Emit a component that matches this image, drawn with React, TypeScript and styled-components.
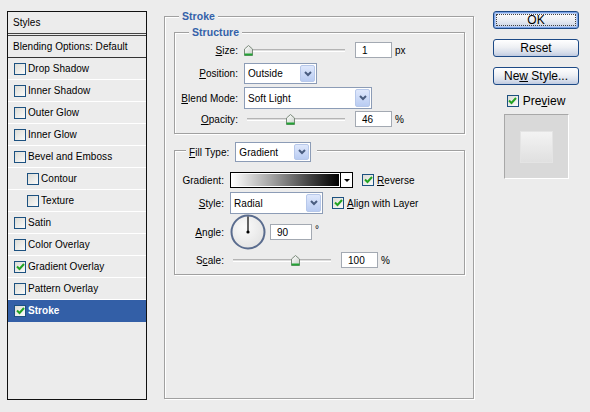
import React from "react";
import styled, { createGlobalStyle, css } from "styled-components";

const GlobalStyle = createGlobalStyle`
  html, body {
    margin: 0;
    padding: 0;
    background: #ececec;
  }
  body {
    font-family: "Liberation Sans", Arial, sans-serif;
    font-size: 10px;
    letter-spacing: 0.05px;
    color: #000;
  }
`;

const listItems = [
  { name: "Drop Shadow" },
  { name: "Inner Shadow" },
  { name: "Outer Glow" },
  { name: "Inner Glow" },
  { name: "Bevel and Emboss" },
  { name: "Contour", indent: true },
  { name: "Texture", indent: true },
  { name: "Satin" },
  { name: "Color Overlay" },
  { name: "Gradient Overlay", checked: true },
  { name: "Pattern Overlay" },
  { name: "Stroke", checked: true, selected: true },
];

const Tick = () => (
  <svg width="9" height="8" viewBox="0 0 9 8">
    <path d="M1 3.5 L3.5 6 L8 1" stroke="#22a322" strokeWidth="2" fill="none" />
  </svg>
);

const Chevron = () => (
  <svg width="8" height="6" viewBox="0 0 8 6">
    <path d="M1 1 L4 4 L7 1" stroke="#4a5d80" strokeWidth="2" fill="none" />
  </svg>
);

const CheckBox = ({ checked }: { checked?: boolean }) => (
  <Box>{checked && <Tick />}</Box>
);

const Thumb = ({ left }: { left: number }) => (
  <ThumbSvg style={{ left }} width="9" height="11" viewBox="0 0 9 11">
    <defs>
      <linearGradient id="thumbFill" x1="0" y1="0" x2="1" y2="1">
        <stop offset="0" stopColor="#ffffff" />
        <stop offset="1" stopColor="#c9cfc9" />
      </linearGradient>
    </defs>
    <path d="M0.5 4 L4.5 0.5 L8.5 4 V10.5 H0.5 Z" fill="url(#thumbFill)" stroke="#7b8a7b" />
    <rect x="0.5" y="8.5" width="8" height="2" fill="#22a335" />
  </ThumbSvg>
);

// slider: value placed along the groove, thumb is 9px wide
const SliderControl = ({ value, max }: { value: number; max: number }) => (
  <Slider>
    <Groove />
    <Thumb left={Math.round((value / max) * 92)} />
  </Slider>
);

const Dropdown = ({ value, width, height }: { value: string; width: number; height: number }) => (
  <Select $w={width} $h={height}>
    <SelectValue>{value}</SelectValue>
    <SelectArrow>
      <Chevron />
    </SelectArrow>
  </Select>
);

const AngleDial = () => (
  <svg width="36" height="36" viewBox="0 0 36 36">
    <defs>
      <radialGradient id="dialFill" cx="0.4" cy="0.35" r="0.7">
        <stop offset="0" stopColor="#fbfbfb" />
        <stop offset="1" stopColor="#e2e2e2" />
      </radialGradient>
    </defs>
    <circle cx="18" cy="18" r="16.5" fill="url(#dialFill)" stroke="#5a6c8e" strokeWidth="2" />
    <line x1="18" y1="2.5" x2="18" y2="18" stroke="#000" strokeWidth="1.2" />
    <circle cx="18" cy="18" r="1.6" fill="#000" />
  </svg>
);

export default function App() {
  return (
    <Dialog>
      <GlobalStyle />
      <StylesList>
        <ListHeader>Styles</ListHeader>
        <BlendingRow>Blending Options: Default</BlendingRow>
        {listItems.map((item) => (
          <ListItem key={item.name} $indent={item.indent} $selected={item.selected}>
            <CheckBox checked={item.checked} />
            <span>{item.name}</span>
          </ListItem>
        ))}
      </StylesList>

      <StrokeGroup>
        <Legend>Stroke</Legend>
        <StructureGroup>
          <Legend>Structure</Legend>
          <FieldRow $top={0} $h={16}>
            <FieldLabel $w={63}><u>S</u>ize:</FieldLabel>
            <SliderControl value={1} max={250} />
            <NumberBox $w={37} $ml={10}>1</NumberBox>
            <Unit>px</Unit>
          </FieldRow>
          <FieldRow $top={5} $h={21}>
            <FieldLabel $w={63}><u>P</u>osition:</FieldLabel>
            <Dropdown value="Outside" width={73} height={21} />
          </FieldRow>
          <FieldRow $top={3} $h={22}>
            <FieldLabel $w={63}><u>B</u>lend Mode:</FieldLabel>
            <Dropdown value="Soft Light" width={128} height={22} />
          </FieldRow>
          <FieldRow $top={2} $h={16}>
            <FieldLabel $w={63}><u>O</u>pacity:</FieldLabel>
            <SliderControl value={46} max={100} />
            <NumberBox $w={37} $ml={10}>46</NumberBox>
            <Unit>%</Unit>
          </FieldRow>
        </StructureGroup>

        <FillGroup>
          <FillLegend>
            <span><u>F</u>ill Type:</span>
            <Dropdown value="Gradient" width={76} height={20} />
          </FillLegend>
          <FieldRow $top={0} $h={16}>
            <FieldLabel $w={49}>Gradient:</FieldLabel>
            <GradientPicker>
              <GradientBar />
              <GradientArrow />
            </GradientPicker>
            <Option $ml={9}>
              <CheckBox checked />
              <span><u>R</u>everse</span>
            </Option>
          </FieldRow>
          <FieldRow $top={4} $h={22}>
            <FieldLabel $w={49}><u>S</u>tyle:</FieldLabel>
            <Dropdown value="Radial" width={93} height={22} />
            <Option $ml={9}>
              <CheckBox checked />
              <span><u>A</u>lign with Layer</span>
            </Option>
          </FieldRow>
          <FieldRow $top={0} $h={36}>
            <FieldLabel $w={49}><u>A</u>ngle:</FieldLabel>
            <AngleDial />
            <NumberBox $w={42} $ml={4}>90</NumberBox>
            <Degree>°</Degree>
          </FieldRow>
          <FieldRow $top={2} $h={16}>
            <FieldLabel $w={49}>S<u>c</u>ale:</FieldLabel>
            <SliderControl value={100} max={150} />
            <NumberBox $w={37} $ml={10}>100</NumberBox>
            <Unit>%</Unit>
          </FieldRow>
        </FillGroup>
      </StrokeGroup>

      <ButtonColumn>
        <Button $default>OK</Button>
        <Button>Reset</Button>
        <Button>Ne<u>w</u> Style...</Button>
        <PreviewToggle>
          <CheckBox checked />
          <span>Pre<u>v</u>iew</span>
        </PreviewToggle>
        <PreviewWell>
          <PreviewSwatch />
        </PreviewWell>
      </ButtonColumn>
    </Dialog>
  );
}

const Dialog = styled.div`
  display: flex;
  align-items: flex-start;
  width: 590px;
  height: 412px;
  background: #ececec;
  overflow: hidden;
`;

/* left list of effects */
const StylesList = styled.div`
  margin: 11px 0 0 7px;
  width: 140px;
  height: 389px;
  box-sizing: border-box;
  border: 1px solid #111;
  display: flex;
  flex-direction: column;
`;

const ListHeader = styled.div`
  height: 21px;
  padding-left: 5px;
  display: flex;
  align-items: center;
  border-bottom: 3px double #444;
`;

const BlendingRow = styled.div`
  height: 21px;
  padding-left: 5px;
  display: flex;
  align-items: center;
  border-bottom: 1px solid #333;
`;

const ListItem = styled.div<{ $indent?: boolean; $selected?: boolean }>`
  height: 21px;
  display: flex;
  align-items: center;
  gap: 2px;
  padding-left: ${(p) => (p.$indent ? 19 : 6)}px;
  border-bottom: 1px solid #fff;
  ${(p) =>
    p.$selected &&
    css`
      background: #335fa7;
      border-bottom-color: #335fa7;
      color: #fff;
      font-weight: bold;
    `}
`;

const Box = styled.span`
  flex: none;
  width: 12px;
  height: 12px;
  box-sizing: border-box;
  border: 1px solid #1c5180;
  background: linear-gradient(135deg, #dcdcd6, #fafafa);
  display: flex;
  align-items: center;
  justify-content: center;
`;

/* group boxes with etched borders */
const GroupBox = styled.div`
  position: relative;
  box-sizing: border-box;
  border: 1px solid #a0a0a0;
  box-shadow: inset 1px 1px 0 #fff, 1px 1px 0 #fff;
`;

const StrokeGroup = styled(GroupBox)`
  margin: 16px 0 0 17px;
  width: 310px;
  height: 383px;
  padding: 15px 0 0 9px;
`;

const StructureGroup = styled(GroupBox)`
  width: 291px;
  height: 102px;
  padding-top: 9px;
`;

const FillGroup = styled(GroupBox)`
  margin-top: 16px;
  width: 291px;
  height: 125px;
  padding-top: 21px;
`;

const Legend = styled.div`
  position: absolute;
  top: -7px;
  left: 14px;
  padding: 0 3px;
  background: #ececec;
  line-height: 12px;
  font-size: 10.5px;
  font-weight: bold;
  color: #3361a9;
`;

const FillLegend = styled.div`
  position: absolute;
  top: -9px;
  left: 11px;
  padding: 0 6px 0 3px;
  background: #ececec;
  display: flex;
  align-items: center;
  gap: 6px;
`;

const FieldRow = styled.div<{ $top: number; $h: number }>`
  display: flex;
  align-items: center;
  margin-top: ${(p) => p.$top}px;
  height: ${(p) => p.$h}px;
`;

const FieldLabel = styled.span<{ $w: number }>`
  width: ${(p) => p.$w}px;
  margin-right: 6px;
  text-align: right;
`;

const Slider = styled.div`
  position: relative;
  width: 101px;
  height: 16px;
  display: flex;
  align-items: center;
`;

const Groove = styled.div`
  margin-left: 3px;
  width: 98px;
  height: 3px;
  box-sizing: border-box;
  border-top: 1px solid #b4b4b4;
  border-bottom: 1px solid #fff;
  background: #dedede;
`;

const ThumbSvg = styled.svg`
  position: absolute;
  top: 3px;
`;

const NumberBox = styled.div<{ $w: number; $ml: number }>`
  width: ${(p) => p.$w}px;
  height: 16px;
  margin-left: ${(p) => p.$ml}px;
  box-sizing: border-box;
  border: 1px solid #a3a9b2;
  background: #fff;
  padding-left: 6px;
  display: flex;
  align-items: center;
`;

const Unit = styled.span`
  margin-left: 3px;
`;

const Degree = styled.span`
  margin: 0 0 6px 3px;
`;

const Select = styled.div<{ $w: number; $h: number }>`
  display: flex;
  width: ${(p) => p.$w}px;
  height: ${(p) => p.$h}px;
  box-sizing: border-box;
  border: 1px solid #8c9cb6;
  background: #fff;
`;

const SelectValue = styled.span`
  flex: 1;
  padding-left: 3px;
  display: flex;
  align-items: center;
`;

const SelectArrow = styled.span`
  width: 15px;
  margin: 1px;
  box-sizing: border-box;
  border: 1px solid #b7c8ea;
  border-radius: 2px;
  background: linear-gradient(#dfe8fc, #b9ccf2);
  display: flex;
  align-items: center;
  justify-content: center;
`;

const GradientPicker = styled.div`
  display: flex;
  width: 123px;
  height: 16px;
  box-sizing: border-box;
  border: 1px solid #000;
  background: #fff;
`;

const GradientBar = styled.div`
  flex: 1;
  margin: 1px;
  background: linear-gradient(to right, #fff 0%, #a8a8a8 35%, #3c3c3c 75%, #000 100%);
`;

const GradientArrow = styled.div`
  width: 11px;
  border-left: 1px solid #000;
  background: #fff;
  display: flex;
  align-items: center;
  justify-content: center;

  &::after {
    content: "";
    border-left: 3px solid transparent;
    border-right: 3px solid transparent;
    border-top: 3px solid #000;
  }
`;

const Option = styled.label<{ $ml: number }>`
  display: flex;
  align-items: center;
  gap: 3px;
  margin-left: ${(p) => p.$ml}px;
`;

/* right column */
const ButtonColumn = styled.div`
  margin: 11px 0 0 19px;
  width: 86px;
  display: flex;
  flex-direction: column;
  align-items: center;
`;

const Button = styled.button<{ $default?: boolean }>`
  width: 86px;
  height: 18px;
  margin-bottom: 10px;
  padding: 0;
  box-sizing: border-box;
  border: 1px solid #1d4a86;
  border-radius: 3px;
  background: linear-gradient(#ffffff, #eef0f4 45%, #d5dcea 80%, #bfcae0);
  font: 12px "Liberation Sans", Arial, sans-serif;
  color: #000;
  ${(p) =>
    p.$default &&
    css`
      box-shadow: inset 0 0 0 1px #7aa2e6, inset 0 0 0 2px #bcd0f2;
      outline: 1px dotted #444;
      outline-offset: -4px;
    `}
`;

const PreviewToggle = styled.label`
  margin-top: -1px;
  display: flex;
  align-items: center;
  gap: 4px;
  font-size: 12px;
  letter-spacing: 0;
`;

const PreviewWell = styled.div`
  margin-top: 6px;
  width: 65px;
  height: 65px;
  box-sizing: border-box;
  border-top: 1px solid #a8a8a8;
  border-left: 1px solid #a8a8a8;
  border-right: 1px solid #fff;
  border-bottom: 1px solid #fff;
  background: #d9d9d9;
  display: flex;
  align-items: center;
  justify-content: center;
`;

const PreviewSwatch = styled.div`
  width: 33px;
  height: 32px;
  box-sizing: border-box;
  border: 1px solid #e4e4e4;
  background: linear-gradient(#f3f3f3, #e0e0e0);
`;
